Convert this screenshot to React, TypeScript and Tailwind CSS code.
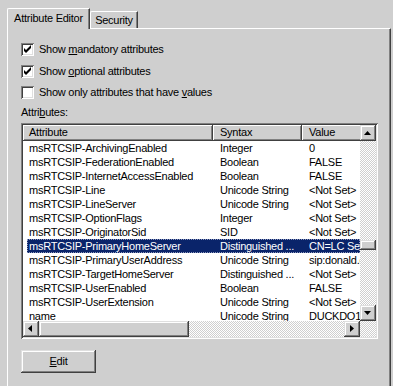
import React from "react";

const raised =
  "shadow-[inset_-1px_-1px_#404040,inset_1px_1px_#dfdfdf,inset_-2px_-2px_#808080,inset_2px_2px_#ffffff]";
const dither =
  "bg-[image:repeating-conic-gradient(#ffffff_0_25%,#cfcfcf_0_50%)] bg-[length:2px_2px]";

type Row = { a: string; s: string; v: string; sel?: boolean };

const rows: Row[] = [
  { a: "msRTCSIP-ArchivingEnabled", s: "Integer", v: "0" },
  { a: "msRTCSIP-FederationEnabled", s: "Boolean", v: "FALSE" },
  { a: "msRTCSIP-InternetAccessEnabled", s: "Boolean", v: "FALSE" },
  { a: "msRTCSIP-Line", s: "Unicode String", v: "<Not Set>" },
  { a: "msRTCSIP-LineServer", s: "Unicode String", v: "<Not Set>" },
  { a: "msRTCSIP-OptionFlags", s: "Integer", v: "<Not Set>" },
  { a: "msRTCSIP-OriginatorSid", s: "SID", v: "<Not Set>" },
  { a: "msRTCSIP-PrimaryHomeServer", s: "Distinguished ...", v: "CN=LC Services,CN=Microsoft", sel: true },
  { a: "msRTCSIP-PrimaryUserAddress", s: "Unicode String", v: "sip:donald.duck@contoso.com" },
  { a: "msRTCSIP-TargetHomeServer", s: "Distinguished ...", v: "<Not Set>" },
  { a: "msRTCSIP-UserEnabled", s: "Boolean", v: "FALSE" },
  { a: "msRTCSIP-UserExtension", s: "Unicode String", v: "<Not Set>" },
  { a: "name", s: "Unicode String", v: "DUCKDO1" },
];

function Arrow({ dir }: { dir: "up" | "down" | "left" | "right" }) {
  const pts: Record<string, string> = {
    up: "4,10 11,10 7.5,6",
    down: "4,6 11,6 7.5,10",
    left: "9,4 9,11 5,7.5",
    right: "6,4 6,11 10,7.5",
  };
  return (
    <svg width="16" height="16" viewBox="0 0 16 16" className="block">
      <polygon points={pts[dir]} fill="#000" />
    </svg>
  );
}

function Btn({ dir }: { dir: "up" | "down" | "left" | "right" }) {
  return (
    <div className={`w-[16px] h-[16px] shrink-0 bg-[#cfcfcf] ${raised}`}>
      <Arrow dir={dir} />
    </div>
  );
}

function CheckBox({ checked }: { checked: boolean }) {
  return (
    <div className="w-[13px] h-[13px] shrink-0 bg-white shadow-[inset_1px_1px_#808080,inset_-1px_-1px_#ffffff,inset_2px_2px_#404040,inset_-2px_-2px_#dfdfdf]">
      {checked && (
        <svg width="13" height="13" viewBox="0 0 13 13" className="block">
          <polygon points="3,5 5,7 10,2 10,5 5,10 3,8" fill="#000" />
        </svg>
      )}
    </div>
  );
}

function U({ children }: { children: React.ReactNode }) {
  return <span className="underline underline-offset-[1px] decoration-[1px]">{children}</span>;
}

export default function App() {
  return (
    <div className="w-[393px] h-[386px] overflow-hidden bg-[#cfcfcf] text-black font-['Liberation_Sans',Arial,sans-serif] text-[11px] tracking-[-0.25px]">
      <div className="flex flex-col pl-[7px] pt-[8px] h-full">
        {/* tabs */}
        <div className="flex items-end h-[20px]">
          <div className="relative z-10 -mb-px w-[83px] h-[21px] pb-[2px] flex items-center justify-center bg-[#cfcfcf] border-t border-l border-white border-r border-r-[#404040] rounded-tl-[2px] shadow-[inset_-1px_0_#808080]">
            Attribute Editor
          </div>
          <div className="w-[48px] h-[17px] flex items-center justify-center border-t border-l border-white border-r border-r-[#404040] rounded-tl-[2px] shadow-[inset_-1px_0_#808080]">
            Security
          </div>
        </div>
        {/* panel */}
        <div className="w-[384px] flex-1 border-t border-l border-white border-r border-r-[#404040] shadow-[inset_-1px_0_#808080] pl-[13px] flex flex-col">
          <div className="mt-[14px] h-[13px] flex items-center gap-[5px]">
            <CheckBox checked />
            <span>
              Show <U>m</U>andatory attributes
            </span>
          </div>
          <div className="mt-[9px] h-[13px] flex items-center gap-[5px]">
            <CheckBox checked />
            <span>
              Show <U>o</U>ptional attributes
            </span>
          </div>
          <div className="mt-[8px] h-[13px] flex items-center gap-[5px]">
            <CheckBox checked={false} />
            <span>
              Show only attributes that have <U>v</U>alues
            </span>
          </div>
          <div className="mt-[7px] h-[13px] leading-[13px]">
            Attri<U>b</U>utes:
          </div>
          {/* list */}
          <div className="mt-[4px] w-[357px] h-[216px] p-[2px] bg-white shadow-[inset_1px_1px_#808080,inset_-1px_-1px_#ffffff,inset_2px_2px_#404040,inset_-2px_-2px_#dfdfdf]">
            <div className="grid grid-cols-[337px_16px] grid-rows-[196px_16px]">
              <div className="overflow-hidden flex flex-col">
                <div className="flex h-[16px] shrink-0 leading-[15px] whitespace-nowrap bg-[#cfcfcf]">
                  <div className={`w-[190px] shrink-0 pl-[6px] shadow-[inset_-1px_-1px_#404040,inset_1px_1px_#ffffff,inset_-2px_-2px_#808080]`}>
                    Attribute
                  </div>
                  <div className={`w-[89px] shrink-0 pl-[7px] shadow-[inset_-1px_-1px_#404040,inset_1px_1px_#ffffff,inset_-2px_-2px_#808080]`}>
                    Syntax
                  </div>
                  <div className={`w-[120px] shrink-0 pl-[7px] shadow-[inset_-1px_-1px_#404040,inset_1px_1px_#ffffff,inset_-2px_-2px_#808080]`}>
                    Value
                  </div>
                </div>
                {rows.map((r) => (
                  <div key={r.a} className="flex h-[14px] shrink-0 leading-[14px] whitespace-nowrap">
                    <div className="w-[4px] shrink-0" />
                    <div
                      className={
                        r.sel
                          ? "flex flex-1 min-w-0 overflow-hidden bg-[#0a246a] text-white outline outline-1 outline-dotted outline-[#8d98bd] -outline-offset-1"
                          : "flex flex-1 min-w-0 overflow-hidden"
                      }
                    >
                      <div className="w-[186px] shrink-0 pl-[2px] overflow-hidden">{r.a}</div>
                      <div className="w-[89px] shrink-0 pl-[7px] overflow-hidden">{r.s}</div>
                      <div className="w-[160px] shrink-0 pl-[7px] overflow-hidden">{r.v}</div>
                    </div>
                  </div>
                ))}
              </div>
              {/* vertical scrollbar */}
              <div className="flex flex-col">
                <Btn dir="up" />
                <div className={`flex-1 flex flex-col ${dither}`}>
                  <div className={`mt-[99px] h-[10px] w-[16px] bg-[#cfcfcf] ${raised}`} />
                </div>
                <Btn dir="down" />
              </div>
              {/* horizontal scrollbar */}
              <div className={`flex ${dither}`}>
                <Btn dir="left" />
                <div className={`w-[150px] h-[16px] bg-[#cfcfcf] ${raised}`} />
                <div className="flex-1" />
                <Btn dir="right" />
              </div>
              <div className={dither} />
            </div>
          </div>
          <div
            className={`mt-[11px] w-[75px] h-[23px] flex items-center justify-center bg-[#cfcfcf] ${raised}`}
          >
            <span>
              <U>E</U>dit
            </span>
          </div>
        </div>
      </div>
    </div>
  );
}
